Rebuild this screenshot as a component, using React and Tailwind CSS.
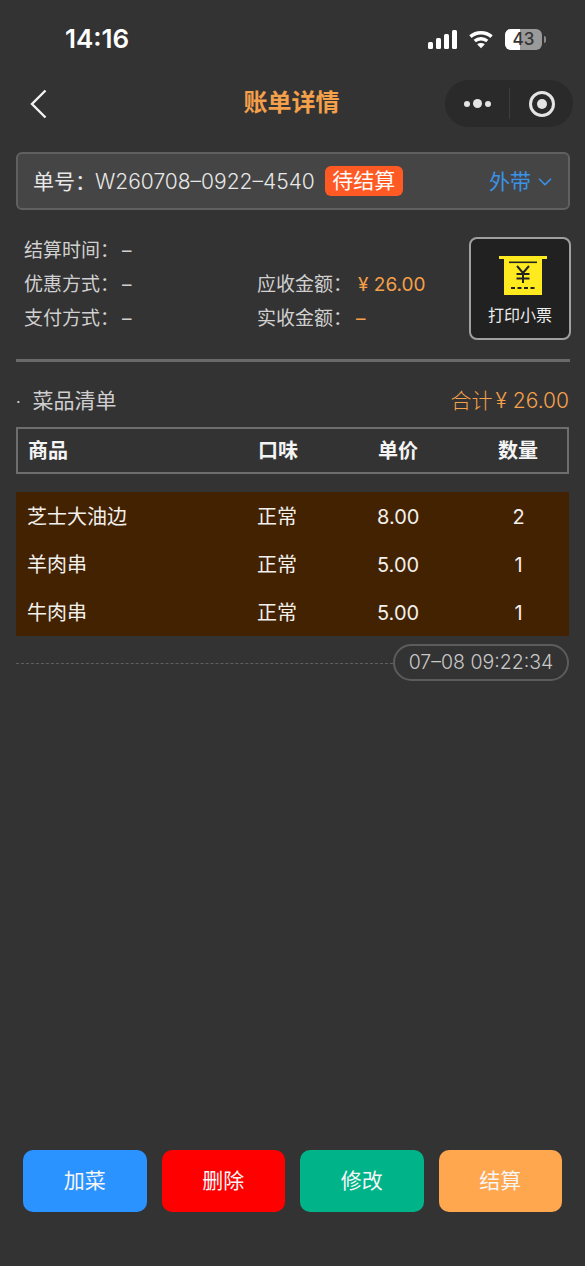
import React from 'react';
import { ChevronDown } from 'lucide-react';

const items = [
    { name: '芝士大油边', taste: '正常', price: '8.00', qty: '2' },
    { name: '羊肉串', taste: '正常', price: '5.00', qty: '1' },
    { name: '牛肉串', taste: '正常', price: '5.00', qty: '1' },
];

const actions = [
    { label: '加菜', color: 'bg-[#2b93ff]' },
    { label: '删除', color: 'bg-[#ff0000]' },
    { label: '修改', color: 'bg-[#00b389]' },
    { label: '结算', color: 'bg-[#ffa74f]' },
];

const StatusIcons = () => (
    <div className="flex items-center">
        <svg width="29" height="19" viewBox="0 0 29 19" fill="#fff">
            <rect x="0" y="12" width="5" height="7" rx="1.5" />
            <rect x="8" y="8" width="5" height="11" rx="1.5" />
            <rect x="16" y="4" width="5" height="15" rx="1.5" />
            <rect x="24" y="0" width="5" height="19" rx="1.5" />
        </svg>
        <svg className="ml-[12px]" width="24" height="19" viewBox="0 0 25 19" fill="none" stroke="#fff" strokeWidth="3.6">
            <path d="M1.5 6.5C7.5 1 17.5 1 23.5 6.5" />
            <path d="M6 11C9.5 8 15.5 8 19 11" />
            <path d="M12.5 18.5L8.5 14.4C10.8 12.6 14.2 12.6 16.5 14.4Z" fill="#fff" stroke="none" />
        </svg>
        {/* battery */}
        <div className="relative ml-[12px] w-[37px] h-[21px] rounded-[6px] overflow-hidden bg-[#9a9a9a] flex items-center justify-center">
            <div className="absolute left-0 top-0 bottom-0 w-[15px] bg-white" />
            <span className="relative text-[17px] leading-none font-medium text-[#333]">43</span>
        </div>
        <div className="ml-[2px] w-[2px] h-[7px] rounded-r-sm bg-[#8a8a8a]" />
    </div>
);

const Info = ({ label, value, className, valueClass }) => (
    <div className={`flex items-center h-[34px] ${className || ''}`}>
        <span>{label}：</span>
        <span className={valueClass}>{value}</span>
    </div>
);

const App = () => {
    return (
        <div
            className="w-[585px] h-[1266px] bg-[#333333] text-white flex flex-col overflow-hidden"
            style={{ fontFamily: 'Inter, "Noto Sans CJK SC", sans-serif' }}
        >
            {/* Status bar */}
            <div className="h-[78px] flex items-center justify-between pl-[65px] pr-[39px]">
                <span className="text-[26px] font-semibold leading-none">14:16</span>
                <StatusIcons />
            </div>

            {/* Nav bar */}
            <div className="relative h-[50px] flex items-center justify-center">
                <svg className="absolute left-[29px] top-[11px]" width="19" height="30" viewBox="0 0 19 30" fill="none" stroke="#f2f2f2" strokeWidth="2.4">
                    <path d="M16.5 1.5L3 15L16.5 28.5" />
                </svg>
                <span className="text-[24px] font-bold text-[#f5a04a] -ml-[2px]">账单详情</span>
                <div className="absolute right-[12px] top-[2px] w-[128px] h-[47px] rounded-full bg-[#2a2a2a] flex items-center">
                    <div className="w-[64px] flex items-center justify-center gap-[3px]">
                        <span className="w-[6px] h-[6px] rounded-full bg-[#e4e4e4]" />
                        <span className="w-[9px] h-[9px] rounded-full bg-[#e4e4e4]" />
                        <span className="w-[6px] h-[6px] rounded-full bg-[#e4e4e4]" />
                    </div>
                    <div className="w-px h-[31px] bg-[#3d3d3d]" />
                    <div className="flex-1 flex items-center justify-center">
                        <div className="w-[26px] h-[26px] rounded-full border-[3px] border-[#e4e4e4] flex items-center justify-center">
                            <span className="w-[10px] h-[10px] rounded-full bg-[#e4e4e4]" />
                        </div>
                    </div>
                </div>
            </div>

            <div className="px-[16px] pt-[24px]">
                {/* Order bar */}
                <div className="w-[554px] h-[58px] rounded-[6px] border-2 border-[#606060] bg-[#454545] flex items-center pl-[15px] pr-[12px] text-[21px] text-[#e8e8e8]">
                    <span className="mt-[1px]">单号：</span>
                    <span className="-ml-[1px] mt-[1px] font-light">W260708–0922–4540</span>
                    <span className="ml-[10px] w-[78px] h-[30px] rounded-[6px] bg-[#ff5a23] text-white text-[21px] flex items-center justify-center">待结算</span>
                    <span className="ml-auto mt-[1px] text-[21px] text-[#3a93e8]">外带</span>
                    <ChevronDown className="ml-[3px] mt-[1px]" size={22} strokeWidth={1.8} color="#3a93e8" />
                </div>

                {/* Bill summary */}
                <div className="mt-[27px] flex items-start justify-between pl-[8px] h-[104px]">
                    <div className="text-[19px] text-[#d0d0d0] grid grid-cols-[233px_auto] -mt-[3px]">
                        <Info label="结算时间" value="–" className="col-span-2" valueClass="ml-[3px]" />
                        <Info label="优惠方式" value="–" valueClass="ml-[3px]" />
                        <Info label="应收金额" value="¥ 26.00" valueClass="ml-[6px] text-[#f5a04a]" />
                        <Info label="支付方式" value="–" valueClass="ml-[3px]" />
                        <Info label="实收金额" value="–" valueClass="ml-[4px] text-[#f5a04a]" />
                    </div>
                    <div className="w-[102px] h-[103px] rounded-[8px] border-2 border-[#a0a0a0] bg-[#212121] flex flex-col items-center mr-[-2px]">
                        <svg className="mt-[17px] ml-[6px]" width="48" height="39" viewBox="0 0 48 39">
                            <path d="M0 0H48V3H43V39H5V3H0Z" fill="#ffea1f" />
                            <rect x="10" y="5.5" width="28" height="1.6" fill="#222" />
                            <path d="M18 10L24 17L30 10M24 17V27M17.5 18H30.5M17.5 22.5H30.5" stroke="#222" strokeWidth="2" fill="none" />
                            <path d="M12 32H37" stroke="#222" strokeWidth="2" strokeDasharray="4 2.5" />
                        </svg>
                        <span className="mt-[8px] text-[16px] leading-[24px] text-[#ededed]">打印小票</span>
                    </div>
                </div>

                <div className="mt-[18px] w-[554px] h-[3px] bg-[#6a6a6a]" />

                {/* Items */}
                <div className="mt-[24px] h-[30px] flex items-center justify-between text-[21px]">
                    <span className="text-[#cfcfcf]"><span className="mr-[12px] text-[16px]">·</span>菜品清单</span>
                    <span className="text-[#f5a04a] font-light">合计<span className="ml-[3px]">¥ 26.00</span></span>
                </div>

                <div className="mt-[11px] w-[553px] h-[47px] border-2 border-[#6e6e6e] grid grid-cols-[230px_120px_120px_1fr] items-center pl-[10px] text-[20px] font-bold text-[#f4f4f4]">
                    <span>商品</span>
                    <span>口味</span>
                    <span>单价</span>
                    <span>数量</span>
                </div>

                <div className="mt-[18px] w-[553px] pt-[1px] h-[144px] bg-[#422201] text-[20px] text-[#f2f0ec]">
                    {items.map((item) => (
                        <div key={item.name} className="h-[48px] grid grid-cols-[230px_120px_120px_1fr] items-center pl-[11px]">
                            <span>{item.name}</span>
                            <span>{item.taste}</span>
                            <span>{item.price}</span>
                            <span className="w-[43px] text-center">{item.qty}</span>
                        </div>
                    ))}
                </div>

                {/* Time divider */}
                <div className="mt-[8px] w-[553px] flex items-center">
                    <div className="flex-1 mt-[1px] border-t border-dashed border-[#5f5f5f]" />
                    <div className="w-[176px] h-[37px] rounded-full border-2 border-[#5c5c5c] flex items-center justify-center text-[19.5px] font-light text-[#c8c8c8]">
                        07–08 09:22:34
                    </div>
                </div>
            </div>

            {/* Bottom actions */}
            <div className="mt-auto mb-[54px] px-[23px] flex justify-between">
                {actions.map((action) => (
                    <div
                        key={action.label}
                        className={`w-[123.5px] h-[62px] rounded-[10px] ${action.color} flex items-center justify-center text-[21px] text-[#f6f6f6]`}
                    >
                        {action.label}
                    </div>
                ))}
            </div>
        </div>
    );
};

export default App;
